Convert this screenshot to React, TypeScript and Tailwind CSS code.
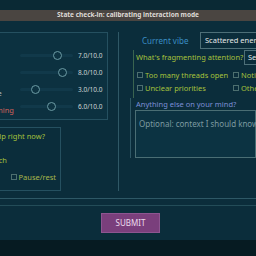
import React from "react";

const sliders = [
  { label: "Focus", value: 7.0, color: "text-[#b8c4c8]" },
  { label: "Energy", value: 8.0, color: "text-[#b8c4c8]" },
  { label: "Confidence", value: 3.0, color: "text-[#b8c4c8]" },
  { label: "Overwhelming", value: 6.0, color: "text-[#d0605a]" },
];

function Slider({ value }: { value: number }) {
  return (
    <div className="relative w-[53px] h-[9px] flex items-center">
      <div className="w-full h-[3px] bg-[#11394a] rounded-full" />
      <div
        className="absolute top-0 w-[9px] h-[9px] rounded-full border border-[#6c9ba4] bg-[#0d3342]"
        style={{ left: `${(value / 10) * 53 - 4.5}px` }}
      />
    </div>
  );
}

function Check({ label }: { label: string }) {
  return (
    <div className="flex items-center gap-[2px]">
      <div className="w-[6px] h-[6px] border border-[#4d6f6f]" />
      <span>{label}</span>
    </div>
  );
}

export default function App() {
  return (
    <div
      className="w-[256px] h-[256px] overflow-hidden bg-[#0b2d3b] flex flex-col"
      style={{ fontFamily: '"Noto Sans", "DejaVu Sans", sans-serif' }}
    >
      <div className="h-[10px] bg-[#0a2934] shrink-0" />
      <div className="h-[11px] shrink-0 bg-[#4a4541] flex items-center justify-center text-[6.5px] font-bold text-[#dedad6] leading-none">
        State check-in: calibrating interaction mode
      </div>
      <div className="flex ml-[-100px] pt-[11px] shrink-0">
        {/* left column */}
        <div className="w-[219px] h-[159px] border-r border-[#2f5866] pr-[10px] flex flex-col shrink-0">
          <div className="h-[88px] border border-[#255060] bg-[#0c3140] pt-[14px] pr-[3px] flex flex-col">
            {sliders.map((s) => (
              <div key={s.label} className="h-[17px] flex items-center">
                <div className="flex-1 pl-[61px] whitespace-nowrap">
                  <span className={`text-[7.5px] ${s.color}`}>{s.label}</span>
                </div>
                <Slider value={s.value} />
                <div className="w-[26px] ml-[5px] text-[6.5px] text-[#cfd6d6] whitespace-nowrap">{s.value.toFixed(1)}/10.0</div>
              </div>
            ))}
          </div>
          <div className="mt-[7px] mr-[47px] h-[64px] border border-[#255060] flex flex-col text-[7.5px] text-[#a6c23c] whitespace-nowrap">
            <div className="pt-[3px] pr-[15px] text-right">What would help right now?</div>
            <div className="mt-[13px] flex justify-end pr-[53px]">
              <span>Quick switch</span>
            </div>
            <div className="mt-[5px] flex justify-end pr-[4px] text-[#a8b84c]">
              <Check label="Pause/rest" />
            </div>
          </div>
        </div>
        {/* right column */}
        <div className="flex-1 flex flex-col min-w-0">
          <div className="h-[17px] flex items-center whitespace-nowrap">
            <span className="ml-[23px] w-[58px] shrink-0 text-[8px] text-[#3a8ec4]">Current vibe</span>
            <div className="h-[17px] w-[80px] shrink-0 border border-[#4d6f78] flex items-center pl-[4px] text-[7.5px] text-[#e4e8e8] overflow-hidden">
              Scattered energy
            </div>
          </div>
          <div className="ml-[14px] mt-[1px] h-[48px] border-l border-[#3a6450] flex flex-col">
            <div className="h-[15px] flex items-center whitespace-nowrap">
              <span className="ml-[2px] w-[108px] shrink-0 text-[7.5px] text-[#a6c23c]">What's fragmenting attention?</span>
              <div className="h-[15px] w-[30px] shrink-0 border border-[#4d6f78] pl-[3px] text-[7.5px] text-[#dfe5e5] flex items-center">Select</div>
            </div>
            <div className="mt-[5px] grid grid-cols-[96px_1fr] gap-y-[3px] ml-[3px] text-[7.5px] text-[#a6c23c] whitespace-nowrap leading-[10px]">
              <Check label="Too many threads open" />
              <Check label="Notifications" />
              <Check label="Unclear priorities" />
              <Check label="Other" />
            </div>
          </div>
          <div className="ml-[11px] h-[60px] border-l border-[#2f5866] flex flex-col">
            <div className="mt-[1px] ml-[5px] text-[7.5px] text-[#7d8fd6] leading-[10px] whitespace-nowrap">Anything else on your mind?</div>
            <div className="mt-[1px] ml-[4px] flex-1 border border-[#4a6e74] bg-[#0c3342] pl-[3px] pt-[9px] text-[8px] text-[#7c9aa0] whitespace-nowrap leading-none">
              Optional: context I should know
            </div>
          </div>
        </div>
      </div>
      <div className="mt-[7px] h-px bg-[#2e5866] shrink-0" />
      <div className="mt-[6px] h-px bg-[#234c58] shrink-0" />
      <div className="flex-1 flex flex-col">
        <div className="h-[34px] flex items-center justify-center">
          <div className="ml-[5px] w-[59px] h-[20px] bg-[#7a3f7c] border border-[#8d5590] flex items-center justify-center text-[8px] text-[#ecdcec]">
            SUBMIT
          </div>
        </div>
        <div className="flex-1 bg-[#061b22]" />
      </div>
    </div>
  );
}
